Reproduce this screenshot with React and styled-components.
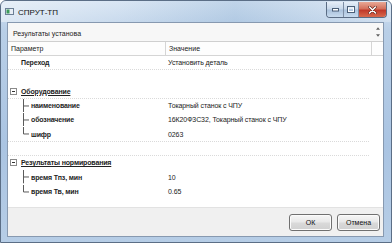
import React from "react";
import styled, { createGlobalStyle } from "styled-components";

const GlobalStyle = createGlobalStyle`
  html, body {
    margin: 0;
    padding: 0;
    background: #ffffff;
  }
  body {
    font-family: "Liberation Sans", Arial, sans-serif;
    font-size: 7px;
    color: #1e1e1e;
  }
`;

// строки таблицы результатов
const rows = [
  { kind: "top", label: "Переход", value: "Установить деталь", dotted: true },
  { kind: "blank" },
  { kind: "group", label: "Оборудование", dotted: true },
  { kind: "child", label: "наименование", value: "Токарный станок с ЧПУ" },
  { kind: "child", label: "обозначение", value: "16К20Ф3С32, Токарный станок с ЧПУ" },
  { kind: "child", label: "шифр", value: "0263", last: true, dotted: true },
  { kind: "blank", dotted: true },
  { kind: "group", label: "Результаты нормирования" },
  { kind: "child", label: "время Тпз, мин", value: "10" },
  { kind: "child", label: "время Тв, мин", value: "0.65", last: true },
];

const App = () => {
  return (
    <>
      <GlobalStyle />
      <Window>
        <TitleBar>
          <AppIcon viewBox="0 0 9 7">
            <rect x="0.5" y="0.5" width="8" height="6" fill="#e8eef5" stroke="#6b7f95" />
            <rect x="1.5" y="1.5" width="3" height="4" fill="#3c9a5a" />
          </AppIcon>
          <Title>СПРУТ-ТП</Title>
          <Caption>
            <CapButton $width="16px">
              <svg width="7" height="4" viewBox="0 0 7 4">
                <rect x="0.5" y="0.5" width="6" height="2.5" fill="#fff" stroke="#4b5f78" />
              </svg>
            </CapButton>
            <CapButton $width="14px">
              <svg width="8" height="7" viewBox="0 0 8 7">
                <rect x="0.5" y="0.5" width="7" height="6" fill="none" stroke="#4b5f78" />
                <rect x="1.5" y="2" width="5" height="3.5" fill="none" stroke="#fff" />
              </svg>
            </CapButton>
            <CloseButton>
              <svg width="9" height="8" viewBox="0 0 9 8">
                <path d="M1.5 1 L7.5 7 M7.5 1 L1.5 7" stroke="#5a1c14" strokeWidth="2.6" strokeLinecap="round" />
                <path d="M1.5 1 L7.5 7 M7.5 1 L1.5 7" stroke="#ffffff" strokeWidth="1.6" strokeLinecap="round" />
              </svg>
            </CloseButton>
          </Caption>
        </TitleBar>

        <Client>
          <Memo>
            <MemoText>Результаты установа</MemoText>
            <MemoScroll>
              <Arrow viewBox="0 0 5 3">
                <path d="M0 3 L2.5 0 L5 3 Z" fill="#606060" />
              </Arrow>
              <Arrow viewBox="0 0 5 3">
                <path d="M0 0 L2.5 3 L5 0 Z" fill="#606060" />
              </Arrow>
            </MemoScroll>
          </Memo>

          <Grid>
            <HeaderRow>
              <HeadCell $width="158px">Параметр</HeadCell>
              <HeadCell $width="206px">Значение</HeadCell>
              <HeadCell $width="auto" $last />
            </HeaderRow>

            {rows.map((row, i) => (
              <Row key={i} $dotted={row.dotted}>
                <LabelCell>
                  {row.kind === "top" && <TopLabel>{row.label}</TopLabel>}
                  {row.kind === "group" && (
                    <>
                      <Toggle viewBox="0 0 7 7">
                        <rect x="0.5" y="0.5" width="6" height="6" fill="#fff" stroke="#8a8a8a" />
                        <path d="M2 3.5 H5" stroke="#333" />
                      </Toggle>
                      <GroupLabel>{row.label}</GroupLabel>
                    </>
                  )}
                  {row.kind === "child" && (
                    <>
                      <Branch viewBox="0 0 7 14.3" preserveAspectRatio="none">
                        <path
                          d={row.last ? "M0.5 0 V7.5 H6" : "M0.5 0 V14.3 M0.5 7.5 H6"}
                          stroke="#555"
                          fill="none"
                        />
                      </Branch>
                      <ChildLabel>{row.label}</ChildLabel>
                    </>
                  )}
                </LabelCell>
                <ValueCell>{row.value}</ValueCell>
              </Row>
            ))}
          </Grid>

          <Footer>
            <DialogButton>ОК</DialogButton>
            <DialogButton>Отмена</DialogButton>
          </Footer>
        </Client>
      </Window>
    </>
  );
};

const Window = styled.div`
  width: 392px;
  height: 243px;
  box-sizing: border-box;
  border: 1px solid #5b6e86;
  border-radius: 6px 6px 0 0;
  background: linear-gradient(180deg, #d3e2f2 0%, #b9cfe7 12%, #aac4e2 60%, #b6cde6 100%);
  display: flex;
  flex-direction: column;
  overflow: hidden;
`;

const TitleBar = styled.div`
  height: 21px;
  display: flex;
  align-items: center;
  padding-left: 4px;
  background: linear-gradient(90deg, rgba(255,255,255,0.45) 0%, rgba(255,255,255,0.15) 30%, rgba(120,160,200,0.2) 60%, rgba(255,255,255,0.25) 100%);
`;

const AppIcon = styled.svg`
  width: 9px;
  height: 7px;
  margin-right: 4px;
`;

const Title = styled.span`
  font-size: 8px;
  color: #111;
  flex: 1;
  margin-top: 1px;
`;

const Caption = styled.div`
  display: flex;
  align-self: flex-start;
  margin-top: 1px;
  margin-right: 4px;
  border: 1px solid #5a6c84;
  border-top: none;
  border-radius: 0 0 4px 4px;
  overflow: hidden;
  height: 15px;
`;

const CapButton = styled.div`
  width: ${(p) => p.$width};
  display: flex;
  align-items: center;
  justify-content: center;
  background: linear-gradient(180deg, #e6eef8 0%, #c6d7ea 48%, #a9c1dc 52%, #c7daee 100%);
  border-right: 1px solid #7d8ea5;
`;

const CloseButton = styled.div`
  width: 27px;
  display: flex;
  align-items: center;
  justify-content: center;
  background: linear-gradient(180deg, #e8a896 0%, #d4705c 45%, #c0392a 55%, #d86a4e 100%);
`;

const Client = styled.div`
  flex: 1;
  margin: 0 7px 5px 6px;
  border: 1px solid #8799b0;
  background: #f0f0f0;
  display: flex;
  flex-direction: column;
  min-height: 0;
`;

const Memo = styled.div`
  height: 18px;
  display: flex;
  background: #f7f7f7;
  border-bottom: 1px solid #cfcfcf;
`;

const MemoText = styled.div`
  flex: 1;
  padding: 7px 0 0 5px;
  font-size: 7px;
  color: #222;
`;

const MemoScroll = styled.div`
  width: 8px;
  display: flex;
  flex-direction: column;
  justify-content: space-between;
  align-items: center;
  padding: 4px 0 4px;
  margin-right: 1px;
`;

const Arrow = styled.svg`
  width: 4px;
  height: 3px;
`;

const Grid = styled.div`
  flex: 1;
  background: #ffffff;
  display: flex;
  flex-direction: column;
`;

const HeaderRow = styled.div`
  height: 13px;
  display: flex;
  border-bottom: 1px solid #d5d5d5;
  background: #fdfdfd;
`;

const HeadCell = styled.div`
  width: ${(p) => p.$width};
  flex: ${(p) => (p.$last ? 1 : "none")};
  box-sizing: border-box;
  padding-left: 3px;
  display: flex;
  align-items: center;
  border-right: ${(p) => (p.$last ? "none" : "1px solid #d5d5d5")};
  color: #222;
`;

const Row = styled.div`
  height: 14.3px;
  box-sizing: border-box;
  display: flex;
  align-items: center;
  border-bottom: 1px dotted ${(p) => (p.$dotted ? "#dadada" : "transparent")};
  margin-right: 14px;
`;

const LabelCell = styled.div`
  width: 158px;
  height: 100%;
  display: flex;
  align-items: center;
`;

const TopLabel = styled.span`
  font-weight: bold;
  font-size: 7px;
  margin-left: 13px;
  letter-spacing: -0.15px;
`;

const Toggle = styled.svg`
  width: 7px;
  height: 7px;
  margin-left: 2px;
`;

const GroupLabel = styled.span`
  margin-left: 4px;
  font-weight: bold;
  text-decoration: underline;
  font-size: 7px;
  color: #222;
  letter-spacing: -0.15px;
`;

const Branch = styled.svg`
  width: 7px;
  height: 100%;
  margin-left: 15px;
`;

const ChildLabel = styled.span`
  margin-left: 1px;
  font-weight: bold;
  font-size: 7px;
  letter-spacing: -0.15px;
`;

const ValueCell = styled.div`
  flex: 1;
  padding-left: 2px;
  font-size: 7px;
  color: #222;
  white-space: nowrap;
  letter-spacing: -0.1px;
`;

const Footer = styled.div`
  height: 28px;
  display: flex;
  justify-content: flex-end;
  align-items: center;
  gap: 5px;
  padding-right: 3px;
  border-top: 1px solid #e2e2e2;
`;

const DialogButton = styled.button`
  width: 43px;
  height: 17px;
  padding: 0;
  font-family: "Liberation Sans", Arial, sans-serif;
  font-size: 7px;
  color: #111;
  border: 1px solid #707070;
  border-radius: 3px;
  background: linear-gradient(180deg, #f6f6f6 0%, #e8e8e8 48%, #dadada 52%, #d0d0d0 100%);
  box-shadow: inset 0 0 0 1px #fbfbfb;
`;

export default App;
